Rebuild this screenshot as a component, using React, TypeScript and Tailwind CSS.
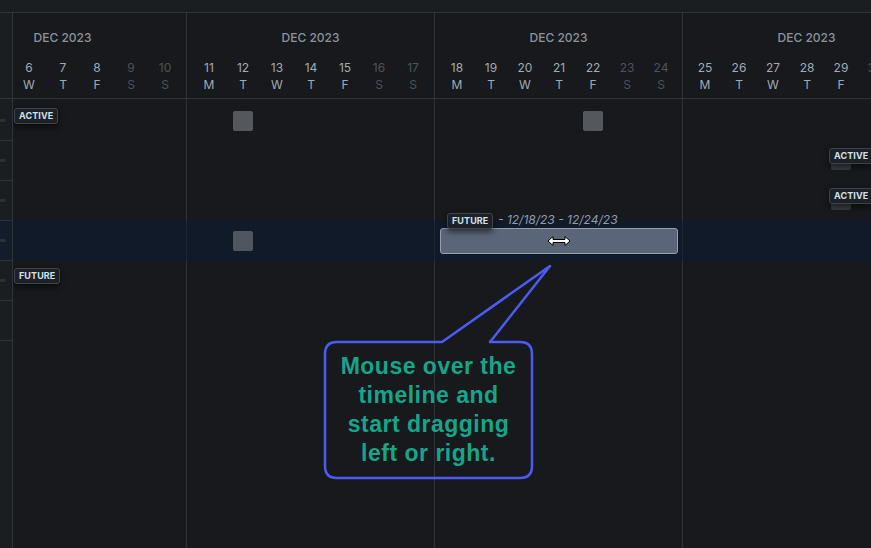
import React from "react";

const LINE = "border-[#2f343a]";
const letters = ["M", "T", "W", "T", "F", "S", "S"];
const weekStarts = [4, 11, 18, 25];

function Badge({ label, className }: { label: string; className: string }) {
  return (
    <div
      className={`absolute z-10 h-[16px] px-[4px] flex items-center rounded-[3px] border border-[#3e444b] bg-[#1d2024] text-[9px] font-bold tracking-[0.01em] text-[#cfe0f0] shadow-[0_3px_6px_rgba(0,0,0,0.55)] ${className}`}
    >
      {label}
    </div>
  );
}

function Square({ className }: { className: string }) {
  return <div className={`absolute w-[20px] h-[20px] rounded-[2px] ${className}`} />;
}

function WeekHeader({ start }: { start: number }) {
  return (
    <div className={`w-[248px] shrink-0 border-r ${LINE} flex flex-col`}>
      <div className="pt-[17px] h-[33px] text-center text-[12px] leading-[16px] font-medium text-[#8b939c]">
        DEC 2023
      </div>
      <div className="flex pl-[5px] pt-[13px]">
        {letters.map((l, i) => {
          const weekend = i > 4;
          return (
            <div
              key={i}
              className={`w-[34px] text-center text-[12px] leading-[17px] ${weekend ? "text-[#4c535a]" : "text-[#a3abb3]"}`}
            >
              <div>{start + i}</div>
              <div>{l}</div>
            </div>
          );
        })}
      </div>
    </div>
  );
}

function Cursor() {
  return (
    <svg width="24" height="12" viewBox="0 0 24 12" className="absolute left-[106px] top-[6px]">
      <path
        d="M1 6 L6 1.5 L6 4.5 L18 4.5 L18 1.5 L23 6 L18 10.5 L18 7.5 L6 7.5 L6 10.5 Z"
        fill="#ffffff"
        stroke="#000000"
        strokeWidth="1"
      />
    </svg>
  );
}

function Callout() {
  const path =
    "M27 82 L132 82 L240 6 L180 82 L210 82 Q222 82 222 94 L222 206 Q222 218 210 218 L27 218 Q15 218 15 206 L15 94 Q15 82 27 82 Z";
  return (
    <div className="absolute left-[310px] top-[260px] w-[250px] h-[230px] pointer-events-none">
      <svg width="250" height="230" viewBox="0 0 250 230" className="absolute inset-0">
        <path d={path} fill="none" stroke="#4a5cf2" strokeWidth="2.5" strokeLinejoin="round" />
      </svg>
      <div className="absolute left-[15px] top-[92px] w-[207px] text-center font-['Liberation_Sans',Arial,sans-serif] text-[23px] leading-[29px] tracking-[0.5px] font-bold text-[#16a58a]">
        Mouse over the
        <br />
        timeline and
        <br />
        start dragging
        <br />
        left or right.
      </div>
    </div>
  );
}

export default function App() {
  const rows = [0, 1, 2, 3, 4, 5];
  return (
    <div className="relative w-[871px] h-[548px] overflow-hidden bg-[#17191c] font-['Inter','Noto_Sans',sans-serif]">
      {/* top strip */}
      <div className={`h-[13px] bg-[#1b1e21] border-b ${LINE}`} />

      <div className="flex h-[535px]">
        {/* left column, mostly scrolled away */}
        <div className={`w-[13px] shrink-0 bg-[#1b1e21] border-r ${LINE} flex flex-col`}>
          <div className={`h-[86px] border-b ${LINE}`} />
          <div className="h-[2px]" />
          {rows.map((r) => (
            <div
              key={r}
              className={`h-[40px] border-b ${LINE} flex items-center ${r === 3 ? "bg-[#121c2b]" : ""}`}
            >
              {r < 5 && <div className="w-[6px] h-[3px] rounded-r-[2px] bg-[#2c3035]" />}
            </div>
          ))}
        </div>

        {/* timeline */}
        <div className="relative flex-1 overflow-hidden flex flex-col">
          <div className={`flex ml-[-74px] h-[86px] border-b ${LINE} shrink-0`}>
            {weekStarts.map((s) => (
              <WeekHeader key={s} start={s} />
            ))}
          </div>

          <div className="relative flex-1 pt-[2px]">
            {/* week grid lines */}
            <div className="absolute inset-0 flex ml-[-74px]">
              {weekStarts.map((s) => (
                <div key={s} className={`w-[248px] shrink-0 border-r ${LINE}`} />
              ))}
            </div>

            {/* row 1 */}
            <div className="relative h-[40px]">
              <Badge label="ACTIVE" className="left-[1px] top-[7px]" />
              <Square className="left-[220px] top-[10px] bg-[#54585d]" />
              <Square className="left-[570px] top-[10px] bg-[#54585d]" />
            </div>

            {/* row 2 */}
            <div className="relative h-[40px]">
              <Square className="left-[818px] top-[9px] bg-[#3a3d41]" />
              <Badge label="ACTIVE" className="left-[816px] top-[7px]" />
            </div>

            {/* row 3 */}
            <div className="relative h-[40px]">
              <Square className="left-[818px] top-[9px] bg-[#3a3d41]" />
              <Badge label="ACTIVE" className="left-[816px] top-[7px]" />
            </div>

            {/* row 4, hovered */}
            <div className="relative h-[40px] bg-[#0d1c33]/55">
              <Square className="left-[220px] top-[10px] bg-[#4f565f]" />
              <div className="absolute left-[427px] top-[7px] w-[238px] h-[26px] rounded-[3px] border border-[#949eac] bg-[#5a6577]">
                <Cursor />
              </div>
              <Badge label="FUTURE" className="left-[434px] top-[-8px]" />
              <div className="absolute left-[485px] top-[-9px] text-[12px] leading-[16px] italic text-[#8d9cb1]">
                - 12/18/23 - 12/24/23
              </div>
            </div>

            {/* row 5 */}
            <div className="relative h-[40px]">
              <Badge label="FUTURE" className="left-[1px] top-[7px]" />
            </div>
          </div>
        </div>
      </div>

      <Callout />
    </div>
  );
}
